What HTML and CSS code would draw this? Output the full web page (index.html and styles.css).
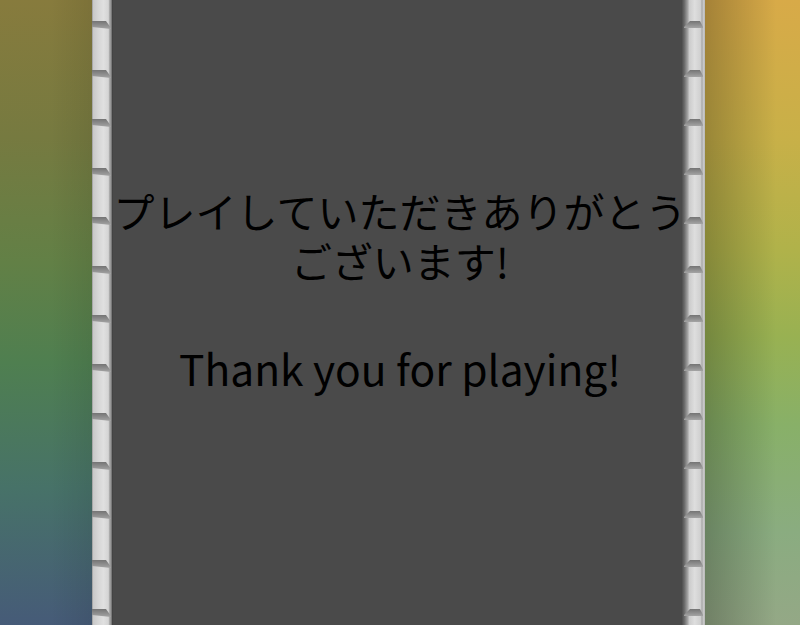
FILE: index.html
```html
<!DOCTYPE html>
<html lang="ja">
<head>
<meta charset="utf-8">
<title>Thank you</title>
<link rel="stylesheet" href="styles.css">
</head>
<body>
<div class="stage">
  <div class="side side-left"></div>
  <div class="pillar pillar-left">
    <svg width="21" height="625" viewBox="0 0 21 625" preserveAspectRatio="none">
      <defs>
        <linearGradient id="lpBase" x1="0" y1="0" x2="1" y2="0">
          <stop offset="0" stop-color="#8a8a8a"/>
          <stop offset="0.05" stop-color="#c8c8c8"/>
          <stop offset="0.3" stop-color="#d6d6d6"/>
          <stop offset="0.55" stop-color="#e0e0e0"/>
          <stop offset="0.78" stop-color="#d4d4d4"/>
          <stop offset="0.82" stop-color="#b0b0b0"/>
          <stop offset="0.92" stop-color="#8c8c8c"/>
          <stop offset="0.95" stop-color="#4c4c4c"/>
          <stop offset="1" stop-color="#3c3c3c"/>
        </linearGradient>
        <linearGradient id="jointL" x1="0" y1="0" x2="0" y2="1">
          <stop offset="0" stop-color="#747474"/>
          <stop offset="1" stop-color="#a4a4a4"/>
        </linearGradient>
        <pattern id="lpJoint" x="0" y="21" width="21" height="49" patternUnits="userSpaceOnUse">
          <polygon points="0,0 14,0 19,7 19,8 0,6" fill="url(#jointL)"/>
        </pattern>
      </defs>
      <rect width="21" height="625" fill="url(#lpBase)"/>
      <rect width="21" height="625" fill="url(#lpJoint)"/>
    </svg>
  </div>
  <main class="panel">
    <div class="jp">プレイしていただきありがとう</div>
    <div class="jp">ございます!</div>
    <div class="en">Thank you for playing!</div>
  </main>
  <div class="pillar pillar-right">
    <svg width="23" height="625" viewBox="0 0 23 625" preserveAspectRatio="none">
      <defs>
        <linearGradient id="rpBase" x1="0" y1="0" x2="1" y2="0">
          <stop offset="0" stop-color="#4e4e4e"/>
          <stop offset="0.1" stop-color="#6a6a6a"/>
          <stop offset="0.25" stop-color="#a4a4a4"/>
          <stop offset="0.32" stop-color="#cccccc"/>
          <stop offset="0.55" stop-color="#dedede"/>
          <stop offset="0.8" stop-color="#d0d0d0"/>
          <stop offset="0.87" stop-color="#a8a8a8"/>
          <stop offset="0.93" stop-color="#c8c8c8"/>
          <stop offset="1" stop-color="#b8b8b8"/>
        </linearGradient>
        <linearGradient id="jointR" x1="0" y1="0" x2="0" y2="1">
          <stop offset="0" stop-color="#747474"/>
          <stop offset="1" stop-color="#a4a4a4"/>
        </linearGradient>
        <pattern id="rpJoint" x="0" y="21" width="23" height="49" patternUnits="userSpaceOnUse">
          <polygon points="8,0 18,0 21,6 21,7 2,7 2,6" fill="url(#jointR)"/>
        </pattern>
      </defs>
      <rect width="23" height="625" fill="url(#rpBase)"/>
      <rect width="23" height="625" fill="url(#rpJoint)"/>
    </svg>
  </div>
  <div class="side side-right"></div>
</div>
</body>
</html>
```

FILE: styles.css
```css
html, body {
  margin: 0;
  padding: 0;
}

body {
  width: 800px;
  height: 625px;
  overflow: hidden;
  font-family: "Noto Sans CJK JP", "Noto Sans", sans-serif;
}

.stage {
  display: flex;
  width: 800px;
  height: 625px;
}

.side {
  flex: none;
  height: 100%;
}

.side-left {
  width: 92px;
  background:
    linear-gradient(to right, rgba(0, 0, 0, 0) 55%, rgba(0, 0, 0, 0.08)),
    linear-gradient(to bottom, #877b3d 0%, #767a40 22%, #628046 42%, #4f7f50 58%, #477268 78%, #465b78 100%);
}

.side-right {
  width: 95px;
  background:
    linear-gradient(to right, rgba(0, 0, 0, 0.24), rgba(0, 0, 0, 0) 75%),
    linear-gradient(to bottom, #d8aa48 0%, #c8b048 22%, #b0b24a 40%, #98b152 54%, #88b068 68%, #8aac80 85%, #94a886 100%);
}

.pillar {
  flex: none;
  height: 100%;
}

.pillar svg {
  display: block;
}

.pillar-left {
  width: 21px;
}

.pillar-right {
  width: 23px;
}

.panel {
  flex: 1;
  min-width: 0;
  background: #4a4a4a;
  display: flex;
  flex-direction: column;
  align-items: center;
  padding: 185px 0 0 5px;
  color: #000;
  white-space: nowrap;
}

.jp {
  font-size: 41px;
  line-height: 50px;
  height: 50px;
  text-align: center;
}

.en {
  margin-top: 58px;
  font-size: 42.5px;
  line-height: 50px;
  height: 50px;
  text-align: center;
}
```
